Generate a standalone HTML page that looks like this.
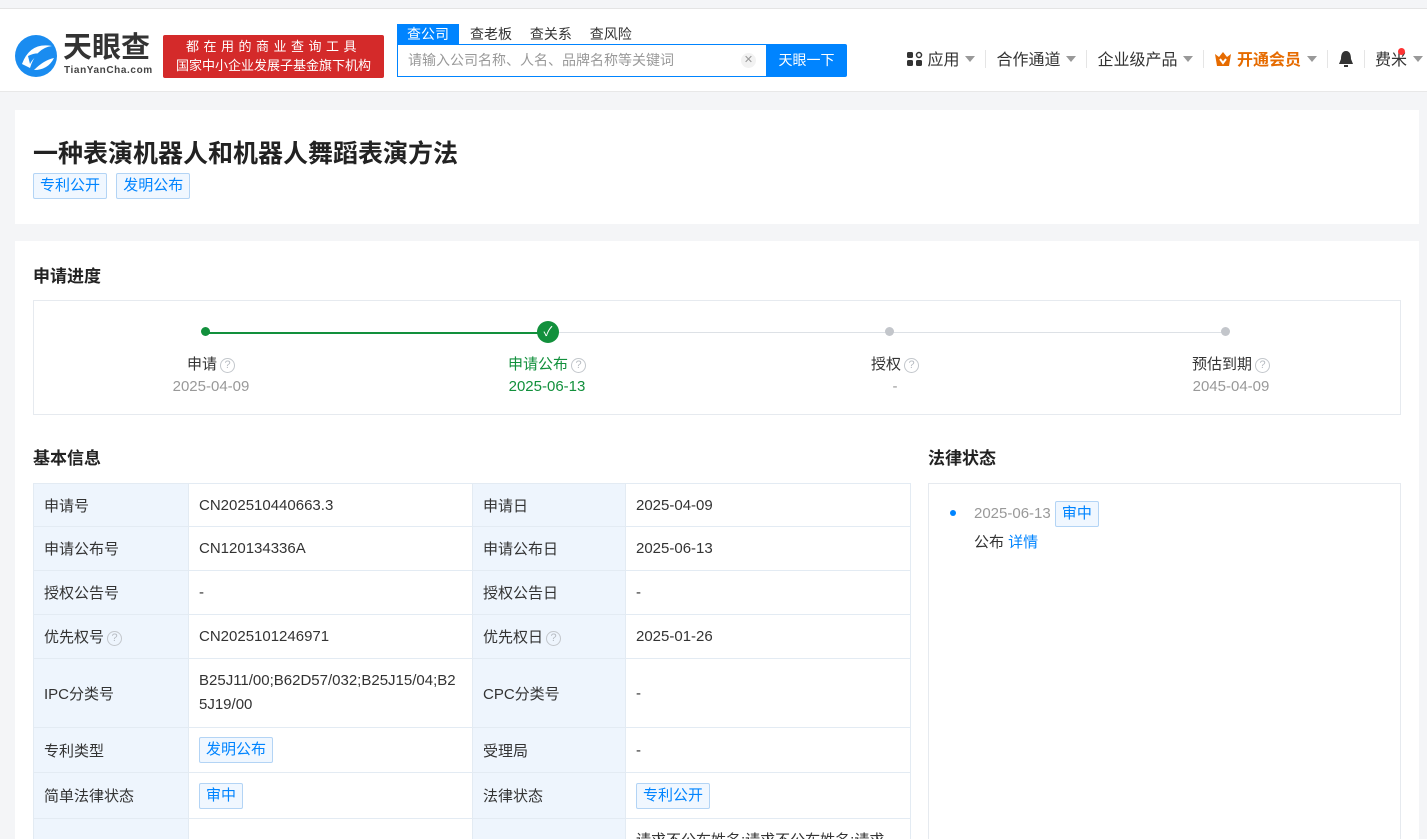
<!DOCTYPE html><html><head><meta charset="utf-8"><style>
*{box-sizing:border-box;margin:0;padding:0}
html{width:1427px;height:839px;overflow:hidden}
body{width:1427px;height:839px;overflow:hidden;background:#f4f5f7;font-family:"Liberation Sans","Noto Sans CJK SC",sans-serif;color:#333;position:relative;font-size:15px}
.abs{position:absolute}
.hdr{left:0;top:8px;width:1427px;height:84px;background:#fff;border-top:1px solid #e4e4e4;border-bottom:1px solid #e8e8e8}
.tag{display:inline-block;border:1px solid #b3d4f5;background:#f0f7ff;color:#0084ff;font-size:15px;line-height:24px;padding:0 6px;border-radius:2px}
table{border-collapse:collapse;position:absolute;left:33px;top:483px;width:877px;font-size:15px;table-layout:fixed}
td{border:1px solid #e3ebf3;padding:0 10px;color:#333;vertical-align:middle;word-break:break-all}
td.l{background:#eef5fd;color:#333}
.q{display:inline-block;width:15px;height:15px;border:1px solid #c3c7cc;border-radius:50%;color:#b7bcc2;font-size:11px;line-height:13px;text-align:center;vertical-align:1px;margin-left:3px}
.tri{display:inline-block;border:5px solid transparent;border-top:6px solid #999;border-bottom:0;vertical-align:3px;margin-left:6px}
.sep{display:inline-block;width:1px;height:18px;background:#e5e5e5;vertical-align:-3px;margin:0 10px}
</style></head><body>
<div class="abs hdr"></div>
<svg class="abs" style="left:14px;top:34px" width="44" height="44" viewBox="0 0 44 44"><circle cx="22" cy="22" r="21" fill="#1a8cf0"/><path d="M8 30 Q16 8 38 12 Q22 14 16 34Z" fill="#fff"/><path d="M20 36 Q30 26 40 24 Q34 36 20 36Z" fill="#fff"/><path d="M14 22 Q22 18 28 20 Q20 22 16 30Z" fill="#1a8cf0"/></svg>
<div class="abs" style="left:63px;top:31px;font-size:29px;font-weight:bold;color:#333;letter-spacing:0px;line-height:34px">天眼查</div>
<div class="abs" style="left:64px;top:65px;font-size:10px;color:#444;font-weight:bold;letter-spacing:0.6px">TianYanCha.com</div>
<div class="abs" style="left:163px;top:35px;width:221px;height:43px;background:#d42a2a;border-radius:2px;color:#fff;font-size:13px;text-align:center;line-height:19px;padding-top:2px"><div style="letter-spacing:4.5px">都在用的商业查询工具</div><div>国家中小企业发展子基金旗下机构</div></div>
<div class="abs" style="left:397px;top:24px;width:62px;height:20px;background:#0084ff;color:#fff;font-size:14px;text-align:center;line-height:20px">查公司</div>
<div class="abs" style="left:470px;top:24px;font-size:14px;line-height:20px;color:#333;word-spacing:14px">查老板 查关系 查风险</div>
<div class="abs" style="left:397px;top:44px;width:370px;height:33px;border:1px solid #0084ff;background:#fff;color:#999;font-size:14px;line-height:31px;padding-left:10px">请输入公司名称、人名、品牌名称等关键词<span style="position:absolute;right:10px;top:8px;width:15px;height:15px;border-radius:50%;background:#f2f2f2;font-size:11px;line-height:15px;text-align:center;color:#999">✕</span></div>
<div class="abs" style="left:766px;top:44px;width:81px;height:33px;background:#0084ff;color:#fff;font-size:14px;text-align:center;line-height:33px;border-radius:0 2px 2px 0">天眼一下</div>
<div class="abs" style="left:907px;top:50px;font-size:16px;color:#333;white-space:nowrap;line-height:20px">
<svg width="16" height="16" style="vertical-align:-2px"><rect x="0" y="1" width="6" height="6" rx="1.5" fill="#333"/><rect x="0" y="9" width="6" height="6" rx="1.5" fill="#333"/><rect x="9" y="9" width="6" height="6" rx="1.5" fill="#333"/><circle cx="12" cy="4" r="2.5" fill="none" stroke="#333" stroke-width="1.5"/></svg> 应用<span class="tri"></span><span class="sep"></span>合作通道<span class="tri"></span><span class="sep"></span>企业级产品<span class="tri"></span><span class="sep"></span><svg width="18" height="16" style="vertical-align:-2px"><path d="M1 3 L5 6 L9 1 L13 6 L17 3 L15 15 L3 15Z" fill="#e66b00"/><path d="M6 8 L9 12 L12 8" stroke="#fff" stroke-width="2" fill="none"/></svg> <b style="color:#e66b00;font-weight:bold">开通会员</b><span class="tri"></span><span class="sep"></span><svg width="16" height="18" style="vertical-align:-3px"><path d="M8 1 C4 1 3 5 3 9 L1 14 L15 14 L13 9 C13 5 12 1 8 1Z" fill="#333"/><rect x="6" y="15" width="4" height="2" fill="#333"/></svg><span class="sep"></span>费米<span class="tri"></span></div>
<div class="abs" style="left:1398px;top:48px;width:7px;height:7px;border-radius:50%;background:#f33"></div>

<div class="abs" style="left:15px;top:110px;width:1404px;height:114px;background:#fff"></div>
<div class="abs" style="left:33px;top:134px;font-size:25px;font-weight:bold;color:#222">一种表演机器人和机器人舞蹈表演方法</div>
<div class="abs" style="left:33px;top:173px"><span class="tag">专利公开</span> <span class="tag" style="margin-left:5px">发明公布</span></div>

<div class="abs" style="left:15px;top:241px;width:1404px;height:600px;background:#fff"></div>
<div class="abs" style="left:33px;top:262px;font-size:17px;font-weight:bold;color:#222">申请进度</div>
<div class="abs" style="left:33px;top:300px;width:1368px;height:115px;border:1px solid #e6eaef"></div>
<div class="abs" style="left:205px;top:332px;width:343px;height:1.5px;background:#12903c"></div>
<div class="abs" style="left:548px;top:332px;width:677px;height:1px;background:#dde1e6"></div>
<div class="abs" style="left:201px;top:327px;width:9px;height:9px;border-radius:50%;background:#12903c"></div>
<div class="abs" style="left:537px;top:321px;width:22px;height:22px;border-radius:50%;background:#12903c;color:#fff;font-size:13px;text-align:center;line-height:22px">✓</div>
<div class="abs" style="left:885px;top:327px;width:9px;height:9px;border-radius:50%;background:#c3c6cb"></div>
<div class="abs" style="left:1221px;top:327px;width:9px;height:9px;border-radius:50%;background:#c3c6cb"></div>
<div class="abs" style="left:111px;top:354px;width:200px;text-align:center;line-height:22px">申请<span class="q">?</span><br><span style="color:#999">2025-04-09</span></div>
<div class="abs" style="left:447px;top:354px;width:200px;text-align:center;line-height:22px;color:#12903c">申请公布<span class="q">?</span><br>2025-06-13</div>
<div class="abs" style="left:795px;top:354px;width:200px;text-align:center;line-height:22px">授权<span class="q">?</span><br><span style="color:#999">-</span></div>
<div class="abs" style="left:1131px;top:354px;width:200px;text-align:center;line-height:22px">预估到期<span class="q">?</span><br><span style="color:#999">2045-04-09</span></div>

<div class="abs" style="left:33px;top:444px;font-size:17px;font-weight:bold;color:#222">基本信息</div>
<div class="abs" style="left:928px;top:444px;font-size:17px;font-weight:bold;color:#222">法律状态</div>
<table>
<colgroup><col style="width:155px"><col style="width:284px"><col style="width:153px"><col style="width:285px"></colgroup>
<tr style="height:43px"><td class="l">申请号</td><td>CN202510440663.3</td><td class="l">申请日</td><td>2025-04-09</td></tr>
<tr style="height:44px"><td class="l">申请公布号</td><td>CN120134336A</td><td class="l">申请公布日</td><td>2025-06-13</td></tr>
<tr style="height:44px"><td class="l">授权公告号</td><td>-</td><td class="l">授权公告日</td><td>-</td></tr>
<tr style="height:44px"><td class="l">优先权号<span class="q">?</span></td><td>CN2025101246971</td><td class="l">优先权日<span class="q">?</span></td><td>2025-01-26</td></tr>
<tr style="height:69px"><td class="l">IPC分类号</td><td style="line-height:24px">B25J11/00;B62D57/032;B25J15/04;B25J19/00</td><td class="l">CPC分类号</td><td>-</td></tr>
<tr style="height:45px"><td class="l">专利类型</td><td><span class="tag">发明公布</span></td><td class="l">受理局</td><td>-</td></tr>
<tr style="height:46px"><td class="l">简单法律状态</td><td><span class="tag">审中</span></td><td class="l">法律状态</td><td><span class="tag">专利公开</span></td></tr>
<tr style="height:60px"><td class="l"></td><td></td><td class="l"></td><td style="vertical-align:top;padding-top:10px;white-space:nowrap;overflow:hidden">请求不公布姓名;请求不公布姓名;请求</td></tr>
</table>
<div class="abs" style="left:928px;top:483px;width:473px;height:370px;border:1px solid #e6eaef"></div>
<div class="abs" style="left:950px;top:510px;width:6px;height:6px;border-radius:50%;background:#0084ff"></div>
<div class="abs" style="left:974px;top:501px;color:#999;line-height:26px">2025-06-13 <span class="tag">审中</span></div>
<div class="abs" style="left:974px;top:532px;line-height:22px">公布 <span style="color:#0084ff">详情</span></div>
</body></html>
